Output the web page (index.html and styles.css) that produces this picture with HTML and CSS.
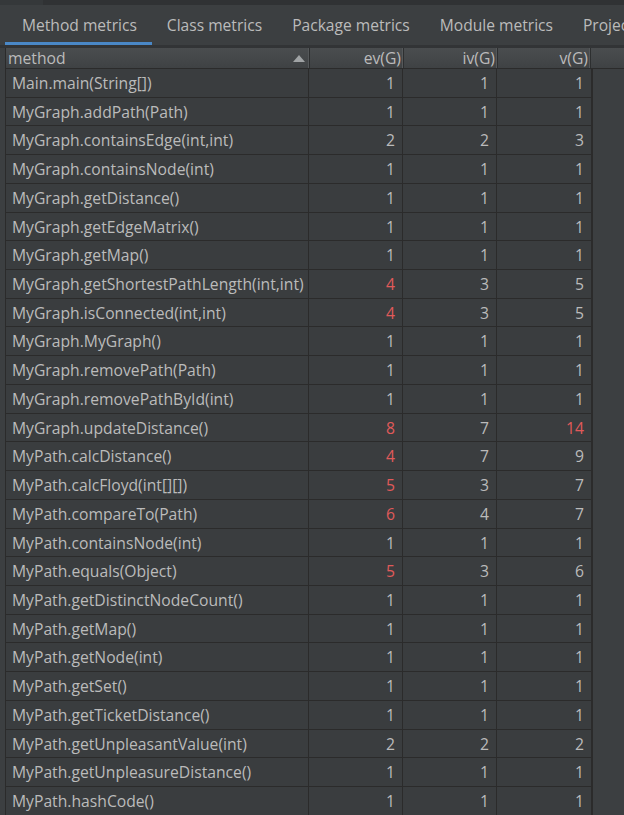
FILE: index.html
```html
<!DOCTYPE html>
<html>
<head>
<meta charset="utf-8">
<link rel="stylesheet" href="styles.css">
</head>
<body>
<div class="topstrip"><div class="topstrip-left"></div></div>
<div class="tabs">
  <div class="tab active">Method metrics</div>
  <div class="tab">Class metrics</div>
  <div class="tab">Package metrics</div>
  <div class="tab">Module metrics</div>
  <div class="tab">Project metrics</div>
</div>
<div class="panel">
  <div class="header">
    <div class="hcell hmethod"><span>method</span><span class="sort"></span></div>
    <div class="hcell num">ev(G)</div>
    <div class="hcell num">iv(G)</div>
    <div class="hcell num">v(G)</div>
    <div class="hcell filler"></div>
  </div>
  <div class="rows" id="rows"></div>
</div>
<script src="app.js"></script>
</body>
</html>
```

FILE: app.js
```js
const data = [
  ["Main.main(String[])",1,1,1],
  ["MyGraph.addPath(Path)",1,1,1],
  ["MyGraph.containsEdge(int,int)",2,2,3],
  ["MyGraph.containsNode(int)",1,1,1],
  ["MyGraph.getDistance()",1,1,1],
  ["MyGraph.getEdgeMatrix()",1,1,1],
  ["MyGraph.getMap()",1,1,1],
  ["MyGraph.getShortestPathLength(int,int)",4,3,5,"ev"],
  ["MyGraph.isConnected(int,int)",4,3,5,"ev"],
  ["MyGraph.MyGraph()",1,1,1],
  ["MyGraph.removePath(Path)",1,1,1],
  ["MyGraph.removePathById(int)",1,1,1],
  ["MyGraph.updateDistance()",8,7,14,"ev v"],
  ["MyPath.calcDistance()",4,7,9,"ev"],
  ["MyPath.calcFloyd(int[][])",5,3,7,"ev"],
  ["MyPath.compareTo(Path)",6,4,7,"ev"],
  ["MyPath.containsNode(int)",1,1,1],
  ["MyPath.equals(Object)",5,3,6,"ev"],
  ["MyPath.getDistinctNodeCount()",1,1,1],
  ["MyPath.getMap()",1,1,1],
  ["MyPath.getNode(int)",1,1,1],
  ["MyPath.getSet()",1,1,1],
  ["MyPath.getTicketDistance()",1,1,1],
  ["MyPath.getUnpleasantValue(int)",2,2,2],
  ["MyPath.getUnpleasureDistance()",1,1,1],
  ["MyPath.hashCode()",1,1,1]
];
const rows = document.getElementById("rows");
for (const r of data) {
  const red = (r[4] || "").split(" ");
  const row = document.createElement("div");
  row.className = "row";
  const m = document.createElement("div");
  m.className = "cell method";
  m.textContent = r[0];
  row.appendChild(m);
  ["ev","iv","v"].forEach((k, i) => {
    const c = document.createElement("div");
    c.className = "cell num" + (red.includes(k) ? " red" : "");
    c.textContent = r[i + 1];
    row.appendChild(c);
  });
  rows.appendChild(row);
}
```

FILE: styles.css
```css
html, body {
  margin: 0;
  padding: 0;
  background: #3c3f41;
  font-family: "Open Sans", "Noto Sans", sans-serif;
  color: #bbbbbb;
  overflow: hidden;
  height: 815px;
}
.topstrip {
  height: 5px;
  background: #303234;
  display: flex;
}
.topstrip-left {
  width: 43px;
  background: #35383a;
}
.tabs {
  display: flex;
  height: 40px;
  white-space: nowrap;
  overflow: hidden;
  border-bottom: 3px solid #323436;
}
.tab {
  font-size: 15.6px;
  padding: 0 15px;
  line-height: 40px;
  color: #bbbbbb;
  border-bottom: 3px solid transparent;
  flex: none;
}
.tab.active {
  margin-left: 5px;
  padding-left: 17px;
  border-bottom-color: #4a88c7;
}
.panel {
  padding-left: 5px;
  font-size: 15.7px;
}
.header {
  display: grid;
  grid-template-columns: 304px 94px 94px 93px 1fr;
  height: 20px;
  border-left: 1px solid #2b2b2b;
  border-bottom: 1px solid #2b2b2b;
  background: linear-gradient(#4a4d4f, #3f4244);
}
.hcell {
  line-height: 20px;
  border-right: 1px solid #2d2f30;
  box-shadow: inset -1px 0 0 #55585a;
  padding: 0 2px;
  overflow: hidden;
  white-space: nowrap;
}
.hcell.filler { border-right: none; box-shadow: none; }
.hmethod {
  display: flex;
  justify-content: space-between;
  align-items: center;
  padding-left: 2px;
  padding-right: 4px;
}
.hcell.num { text-align: right; }
.sort {
  width: 0;
  height: 0;
  border-left: 6px solid transparent;
  border-right: 6px solid transparent;
  border-bottom: 7px solid #a0a3a5;
}
.rows {
  width: 585px;
  border-left: 1px solid #2b2b2b;
  border-right: 2px solid #2b2b2b;
}
.row {
  display: grid;
  grid-template-columns: 303px 94px 94px 94px;
  height: 28.72px;
  box-sizing: border-box;
  border-bottom: 1px solid #2b2b2b;
  background: #3a3d3f;
}
.cell {
  line-height: 28px;
  border-right: 1px solid #2b2b2b;
  white-space: nowrap;
  overflow: hidden;
}
.cell:last-child { border-right: none; }
.cell.method { padding-left: 6px; }
.cell.num { text-align: right; padding-right: 7px; }
.cell.red { color: #e05a5a; }
```
